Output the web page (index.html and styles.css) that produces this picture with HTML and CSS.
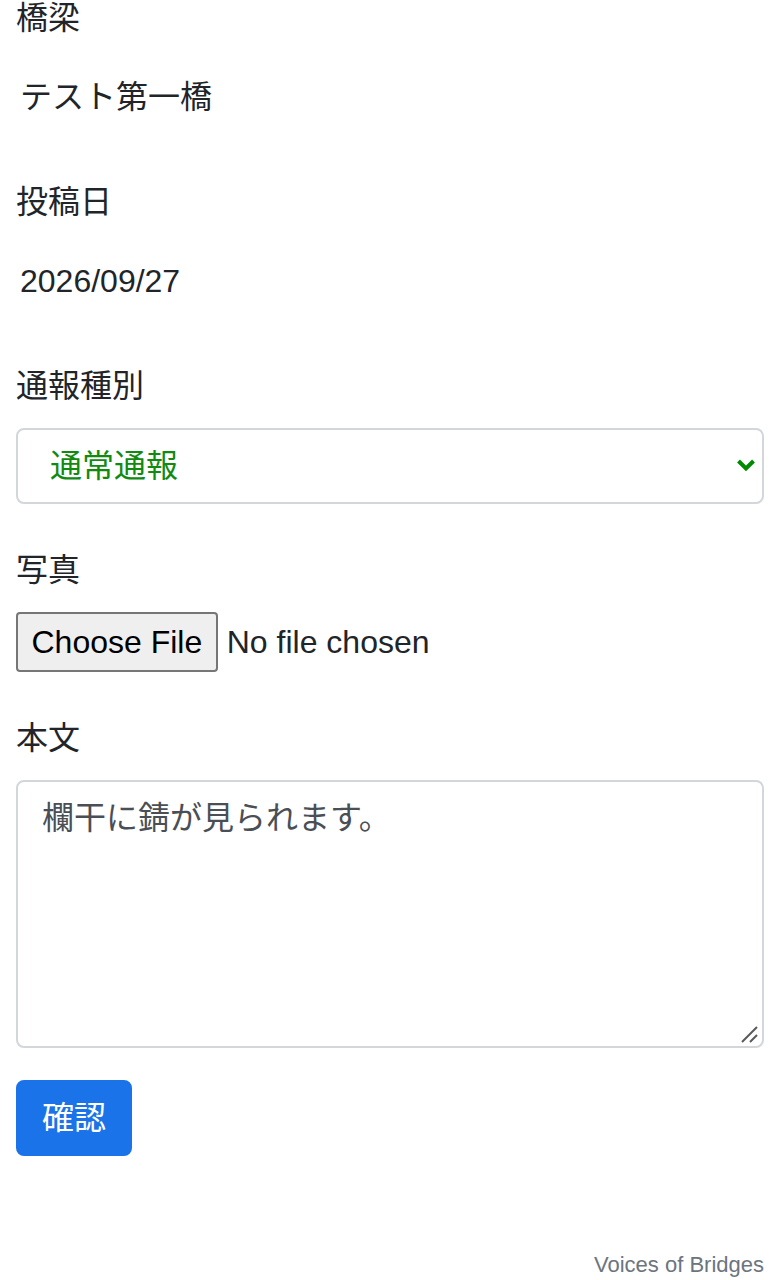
FILE: index.html
```html
<!DOCTYPE html>
<html lang="ja">
<head>
<meta charset="utf-8">
<title>Voices of Bridges</title>
<link rel="stylesheet" href="styles.css">
</head>
<body>
<main class="page">
  <form class="report-form">
    <div class="group group-first">
      <label class="label">橋梁</label>
      <p class="plain">テスト第一橋</p>
    </div>
    <div class="group">
      <label class="label">投稿日</label>
      <p class="plain plain-num">2026/09/27</p>
    </div>
    <div class="group">
      <label class="label" for="kind">通報種別</label>
      <div class="select-wrap">
        <select id="kind" class="select">
          <option>通常通報</option>
          <option>緊急通報</option>
        </select>
        <svg class="chevron" width="20" height="14" viewBox="0 0 20 14" aria-hidden="true"><path d="M2.5 3 L10 10.5 L17.5 3" fill="none" stroke="#008a00" stroke-width="4"/></svg>
      </div>
    </div>
    <div class="group">
      <label class="label" for="photo">写真</label>
      <input id="photo" class="file" type="file">
    </div>
    <div class="group group-last">
      <label class="label" for="body">本文</label>
      <div class="textarea-wrap">
        <textarea id="body" class="textarea">欄干に錆が見られます。</textarea>
        <svg class="grip" width="18" height="18" viewBox="0 0 18 18" aria-hidden="true"><path d="M1 17 L16 2 M9 17 L16 10" fill="none" stroke="#5a5a5a" stroke-width="2"/></svg>
      </div>
    </div>
    <button type="button" class="btn">確認</button>
  </form>
  <footer class="footer">Voices of Bridges</footer>
</main>
</body>
</html>
```

FILE: styles.css
```css
html, body {
  margin: 0;
  padding: 0;
  background: #ffffff;
}

body {
  font-family: "Liberation Sans", "Noto Sans CJK JP", sans-serif;
  font-size: 32px;
  line-height: 48px;
  color: #212529;
}

.page {
  padding: 0 16px;
}

.report-form {
  display: flex;
  flex-direction: column;
  align-items: flex-start;
}

.group {
  display: flex;
  flex-direction: column;
  align-self: stretch;
  margin-bottom: 40px;
}

.group-first {
  margin-top: -8px;
}

.group-last {
  margin-bottom: 32px;
}

.label {
  display: block;
  padding-top: 2px;
  margin-bottom: 18px;
  line-height: 48px;
}

.plain {
  margin: 0;
  padding: 13px 4px 15px;
  line-height: 48px;
}

.select-wrap {
  position: relative;
}

.select {
  appearance: none;
  -webkit-appearance: none;
  width: 100%;
  box-sizing: border-box;
  height: 76px;
  margin: 0;
  padding: 12px 60px 12px 32px;
  border: 2px solid #d3d6da;
  border-radius: 8px;
  background: #ffffff;
  color: #118a11;
  font-family: "Liberation Sans", "Noto Sans CJK JP", sans-serif;
  font-size: 32px;
  line-height: 48px;
}

.chevron {
  position: absolute;
  right: 8px;
  top: 30px;
  pointer-events: none;
}

.file {
  font-family: "Liberation Sans", "Noto Sans CJK JP", sans-serif;
  font-size: 32px;
  line-height: 40px;
  color: #212529;
  height: 60px;
  padding: 0;
  margin: 0;
}

.file::file-selector-button {
  font-family: "Liberation Sans", sans-serif;
  font-size: 32px;
  line-height: 40px;
  height: 60px;
  padding: 8px 13.5px;
  margin: 0 9px 0 0;
  border: 2px solid #767676;
  border-radius: 4px;
  background: #efefef;
  color: #000000;
}

.textarea-wrap {
  position: relative;
}

.textarea {
  display: block;
  width: 100%;
  box-sizing: border-box;
  height: 268px;
  margin: 0;
  padding: 12px 24px;
  border: 2px solid #d3d6da;
  border-radius: 8px;
  font-family: "Liberation Sans", "Noto Sans CJK JP", sans-serif;
  font-size: 32px;
  line-height: 48px;
  color: #4a4f55;
  resize: none;
}

.grip {
  position: absolute;
  right: 5px;
  bottom: 5px;
  pointer-events: none;
}

.btn {
  margin: 0;
  padding: 12px 24px;
  border: 2px solid #1a73e8;
  border-radius: 8px;
  background: #1a73e8;
  color: #ffffff;
  font-family: "Liberation Sans", "Noto Sans CJK JP", sans-serif;
  font-size: 32px;
  line-height: 48px;
}

.footer {
  margin-top: 94px;
  text-align: right;
  font-size: 22px;
  line-height: 30px;
  color: #6c757d;
}
```
